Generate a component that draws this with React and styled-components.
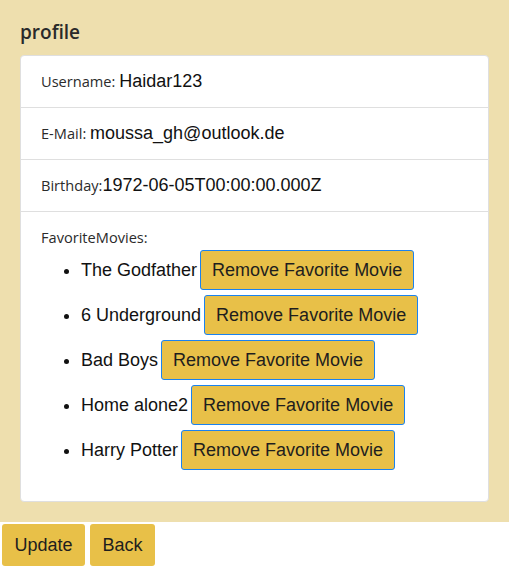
import React from "react";
import styled, { createGlobalStyle } from "styled-components";

const GlobalStyle = createGlobalStyle`
    * { box-sizing: border-box; }
    body {
        margin: 0;
        background: #ffffff;
        color: #212529;
        font-family: "Open Sans", "Noto Sans", sans-serif;
        font-size: 16px;
        line-height: 1.5;
    }
`;

const movies = ["The Godfather", "6 Underground", "Bad Boys", "Home alone2", "Harry Potter"];

const ProfileView = () => {
    return (
        <>
            <GlobalStyle />
            <ProfileContainer>
                <Title>profile</Title>
                <Card>
                    <ListItem>
                        <Label>Username: </Label>
                        <Value>Haidar123</Value>
                    </ListItem>
                    <ListItem>
                        <Label>E-Mail: </Label>
                        <Value>moussa_gh@outlook.de</Value>
                    </ListItem>
                    <ListItem>
                        <Label>Birthday:</Label>
                        <Value>1972-06-05T00:00:00.000Z</Value>
                    </ListItem>
                    <ListItem last>
                        <Label>FavoriteMovies:</Label>
                        <MovieList>
                            {
                                movies.map((movie, index) => {
                                    return (
                                        <Movie key={index}>
                                            {movie}
                                            <RemoveButton>Remove Favorite Movie</RemoveButton>
                                        </Movie>
                                    )
                                })
                            }
                        </MovieList>
                    </ListItem>
                </Card>
            </ProfileContainer>
            <Actions>
                <ActionButton>Update</ActionButton>
                <ActionButton>Back</ActionButton>
            </Actions>
        </>
    )
}

const ProfileContainer = styled.section`
    background: #eedfae;
    padding: 17px 20px 20px;
`;

const Title = styled.h2`
    margin: 0 0 8px;
    font-family: "Open Sans", sans-serif;
    font-weight: 600;
    font-size: 19px;
    line-height: 30px;
    color: #2a2a2a;
`;

const Card = styled.div`
    background: #ffffff;
    border: 1px solid #dfdfdf;
    border-radius: 4px;
`;

const ListItem = styled.div`
    padding: 12px 20px;
    border-bottom: ${({ last }) => last ? "none" : "1px solid #dfdfdf"};
    line-height: 27px;
`;

const Label = styled.span`
    font-family: "Open Sans", sans-serif;
    font-size: 14.6px;
    color: #2b2b2b;
    white-space: pre;
`;

const Value = styled.span`
    font-family: "Liberation Sans", Arial, sans-serif;
    font-size: 18px;
    color: #111111;
`;

const MovieList = styled.ul`
    margin: -3px 0 16px;
    padding-left: 40px;
`;

const Movie = styled.li`
    height: 45px;
    padding-top: 2px;
    font-family: "Liberation Sans", Arial, sans-serif;
    font-size: 18px;
    line-height: 40px;
    color: #111111;
`;

const RemoveButton = styled.button`
    margin-left: 3px;
    height: 40px;
    padding: 0 11px;
    vertical-align: top;
    background: #e8c048;
    border: 1px solid #1a82f0;
    border-radius: 3px;
    color: #1e1e1e;
    font-family: "Liberation Sans", Arial, sans-serif;
    font-size: 18px;
    cursor: pointer;
`;

const Actions = styled.div`
    display: flex;
    gap: 5px;
    padding: 2px;
`;

const ActionButton = styled.button`
    height: 42px;
    padding: 0 12.5px;
    background: #e8c048;
    border: none;
    border-radius: 3px;
    color: #1e1e1e;
    font-family: "Liberation Sans", Arial, sans-serif;
    font-size: 18px;
    cursor: pointer;
`;

export default ProfileView;
